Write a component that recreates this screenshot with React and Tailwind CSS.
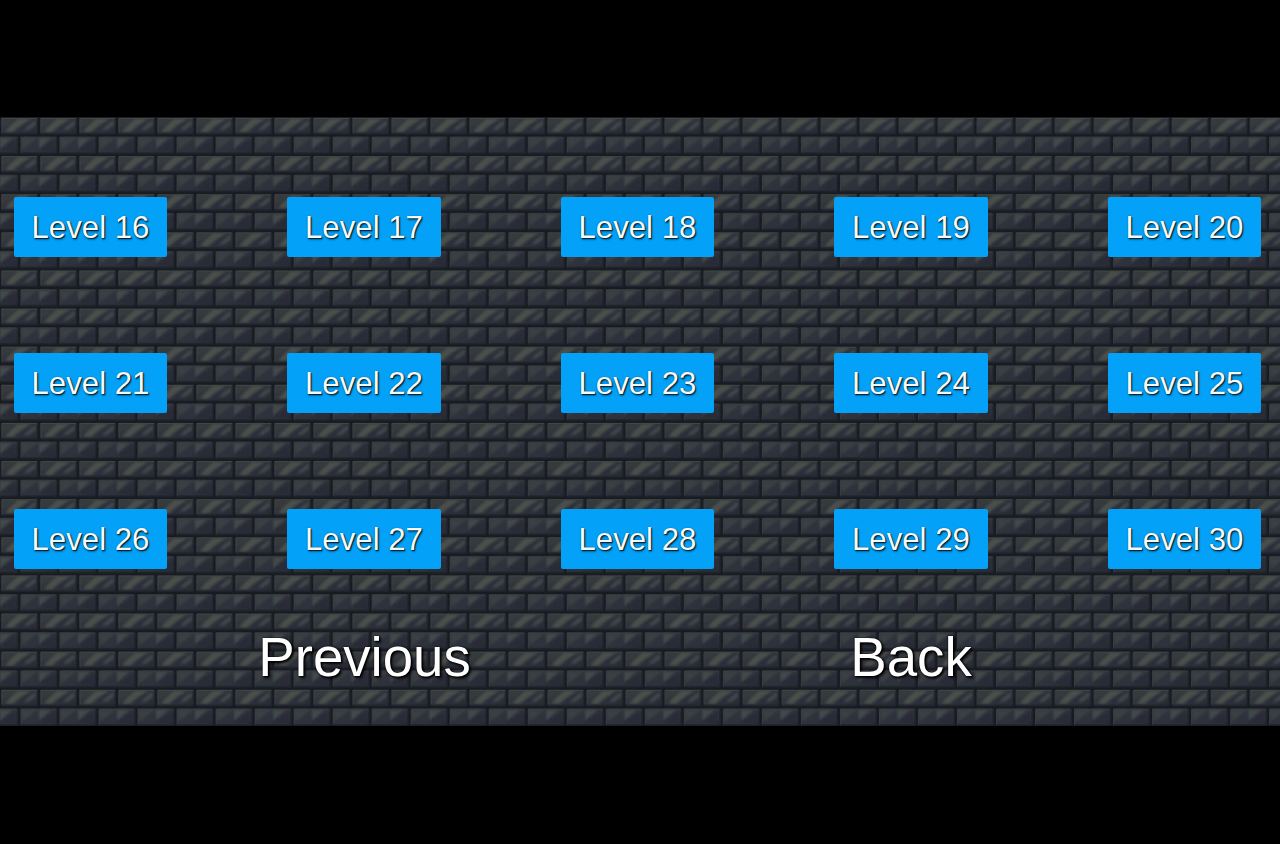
const levels = Array.from({ length: 15 }, (_, i) => i + 16);

// Stone wall, one tile holds two staggered courses of bricks
function BrickWall() {
  return (
    <svg className="col-start-1 row-start-1 h-[609px] w-full" aria-hidden="true">
      <defs>
        <filter id="soften" x="-5%" y="-5%" width="110%" height="110%">
          <feGaussianBlur stdDeviation="0.65" />
        </filter>
        <filter id="sheen" x="-10%" y="-20%" width="120%" height="140%">
          <feGaussianBlur stdDeviation="0.9" />
        </filter>
        <linearGradient id="stone" x1="0" y1="0" x2="1" y2="1">
          <stop offset="0" stopColor="#373b3f" />
          <stop offset="0.5" stopColor="#2f323a" />
          <stop offset="1" stopColor="#272a33" />
        </linearGradient>
        <g id="streaked">
          <rect x="1.5" y="1" width="36" height="16" fill="url(#stone)" />
          <g filter="url(#sheen)">
            <path d="M2 2H16L7 8L2 10Z" fill="#363b3d" />
            <path d="M18 2H31L21 8L13 15H5L10 9Z" fill="#4b4f4b" />
            <path d="M24 8L30 4L27 15H15Z" fill="#2c2f3b" />
            <path d="M36 3V8L29 13H24L30 7Z" fill="#40464a" />
          </g>
          <path d="M1.5 1.5H37" stroke="#414645" strokeWidth="1" />
          <path d="M2 2V16" stroke="#3c4143" strokeWidth="1" />
          <path d="M2 16.5H37V3" stroke="#242730" strokeWidth="1" fill="none" />
        </g>
        <g id="plain">
          <rect x="1" y="1" width="36.5" height="16.5" fill="url(#stone)" />
          <g filter="url(#sheen)">
            <path d="M2 2H17L11 7L3 13Z" fill="#3b4145" />
            <path d="M12 8L18 4V15H5Z" fill="#2e313c" />
            <path d="M27 9L35 5V15H22Z" fill="#292c37" />
          </g>
          <path d="M19.5 2H32L25 8L19.5 13Z" fill="#43494b" filter="url(#sheen)" />
          <path d="M1.5 1.5H36" stroke="#3c4145" strokeWidth="1" />
          <path d="M1.5 2V16" stroke="#3a3f43" strokeWidth="1" />
          <path d="M2 17H37V3" stroke="#22252d" strokeWidth="1" fill="none" />
        </g>
        <pattern id="bricks" width="39.02" height="38.12" patternUnits="userSpaceOnUse">
          <rect width="40" height="39" fill="#171a20" />
          <g filter="url(#soften)">
            <rect x="-2" y="-2" width="44" height="44" fill="#171a20" />
            <use href="#streaked" x="-39" />
            <use href="#streaked" />
            <use href="#streaked" x="39" />
            <use href="#plain" x="-19.5" y="19" />
            <use href="#plain" x="19.5" y="19" />
          </g>
        </pattern>
      </defs>
      <rect width="100%" height="100%" fill="url(#bricks)" />
    </svg>
  );
}

function LevelButton({ level }) {
  return (
    <button className="h-[60px] w-[153.6px] rounded-[2px] bg-[#03a1f7] pt-[1.4px] text-[31.2px] leading-none whitespace-nowrap text-[#f4f9fc] [text-shadow:0_0_1px_rgba(0,0,0,0.6),1px_1px_1px_rgba(0,0,0,0.75),1px_2px_2px_rgba(0,0,0,0.3)]">
      Level {level}
    </button>
  );
}

export default function App() {
  return (
    <div className="flex h-[844px] w-[1280px] flex-col overflow-hidden bg-black pt-[117px] font-['Liberation_Sans',Arial,sans-serif]">
      <main className="grid h-[609px] grid-cols-1 grid-rows-1">
        <BrickWall />
        <div className="z-10 col-start-1 row-start-1 flex flex-col pt-[79.6px]">
          <div className="ml-[13.7px] grid grid-cols-[repeat(5,153.6px)] gap-x-[119.9px] gap-y-[96.3px]">
            {levels.map((level) => (
              <LevelButton key={level} level={level} />
            ))}
          </div>
          <nav className="mt-[57px] flex pl-[257px] text-[54.6px] leading-[64px] text-white">
            <button className="w-[215px] [text-shadow:0_0_2px_rgba(0,0,0,0.9),1px_1px_2px_rgba(0,0,0,1),2px_2px_3px_rgba(0,0,0,0.8)]">
              Previous
            </button>
            <button className="ml-[377px] w-[124px] [text-shadow:0_0_2px_rgba(0,0,0,0.9),1px_1px_2px_rgba(0,0,0,1),2px_2px_3px_rgba(0,0,0,0.8)]">
              Back
            </button>
          </nav>
        </div>
      </main>
    </div>
  );
}
